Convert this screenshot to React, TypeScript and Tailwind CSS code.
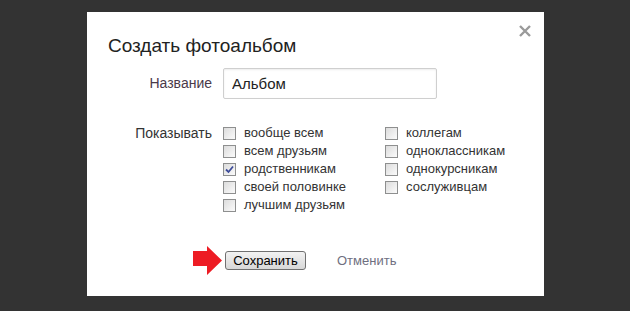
import { Fragment } from 'react';

const left = ['вообще всем', 'всем друзьям', 'родственникам', 'своей половинке', 'лучшим друзьям'];
const right = ['коллегам', 'одноклассникам', 'однокурсникам', 'сослуживцам'];

function Box({ checked }: { checked?: boolean }) {
  return (
    <span className="w-[13px] h-[13px] border border-[#8e8f8f] bg-gradient-to-br from-[#dcdcdc] to-[#fbfbfb] flex items-center justify-center shrink-0">
      {checked && (
        <svg width="9" height="9" viewBox="0 0 9 9">
          <path d="M1 4.5 L3.5 7 L8 1.5" fill="none" stroke="#3d4c9a" strokeWidth="1.8" />
        </svg>
      )}
    </span>
  );
}

function Item({ label, checked }: { label: string; checked?: boolean }) {
  return (
    <label className="flex items-center gap-[8px] h-[18px]">
      <Box checked={checked} />
      <span>{label}</span>
    </label>
  );
}

export default function App() {
  return (
    <div className="w-[630px] h-[311px] bg-[#333333] pt-[12px] pl-[87px] font-['Liberation_Sans',Arial,sans-serif]">
      <div className="relative w-[457px] h-[284px] bg-white">
        <button className="absolute right-[13px] top-[13px] text-[#9a9a9a]">
          <svg width="12" height="12" viewBox="0 0 12 12">
            <path d="M1 1 L11 11 M11 1 L1 11" stroke="currentColor" strokeWidth="2.4" />
          </svg>
        </button>
        <h2 className="pl-[21px] pt-[23px] text-[19px] leading-[22px] text-[#222]">Создать фотоальбом</h2>

        <div className="flex items-center mt-[11px]">
          <span className="w-[125px] text-right text-[14px] text-[#4a3a4a]">Название</span>
          <input
            defaultValue="Альбом"
            className="ml-[11px] w-[214px] h-[31px] border border-[#cfcfcf] rounded-[2px] px-[8px] text-[15px] text-[#222] shadow-[inset_0_1px_2px_rgba(0,0,0,0.08)] outline-none"
          />
        </div>

        <div className="flex mt-[25px] text-[13px] text-[#333]">
          <span className="w-[125px] text-right text-[14px] leading-[18px]">Показывать</span>
          <div className="ml-[11px] flex flex-col w-[162px] leading-[18px]">
            {left.map((l) => (
              <Item key={l} label={l} checked={l === 'родственникам'} />
            ))}
          </div>
          <div className="flex flex-col leading-[18px]">
            {right.map((l) => (
              <Fragment key={l}>
                <Item label={l} />
              </Fragment>
            ))}
          </div>
        </div>

        <div className="flex items-center mt-[32px] pl-[106px]">
          <svg width="29" height="29" viewBox="0 0 29 29" className="mr-[3px]">
            <path d="M0 5 H14 V0 L29 14.5 L14 29 V20 H0 Z" fill="#ed1c24" />
          </svg>
          <button className="w-[81px] h-[19px] border border-[#707070] rounded-[3px] bg-gradient-to-b from-[#f2f2f2] to-[#d8d8d8] text-[13px] leading-[17px] text-black">
            Сохранить
          </button>
          <span className="ml-[31px] text-[13px] text-[#6f6f7f]">Отменить</span>
        </div>
      </div>
    </div>
  );
}
